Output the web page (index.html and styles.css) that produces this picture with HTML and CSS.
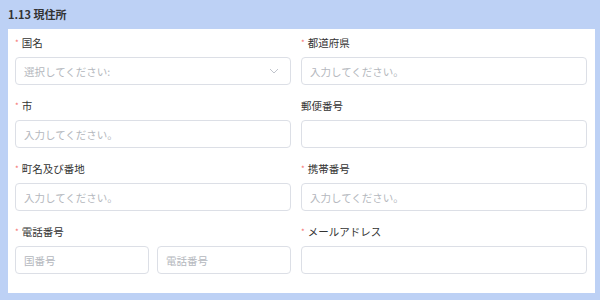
FILE: index.html
```html
<!DOCTYPE html>
<html lang="ja">
<head>
    <meta charset="UTF-8">
    <meta name="viewport" content="width=device-width, initial-scale=1.0">
    <title>現住所</title>
    <link rel="stylesheet" href="styles.css">
</head>
<body>
    <div class="section">
        <h2 class="section-title">1.13 現住所</h2>
        <div class="panel">
            <div class="form-grid">
                <div class="field">
                    <label class="label"><span class="req">*</span>国名</label>
                    <div class="select">
                        <span class="placeholder">選択してください:</span>
                        <svg class="chevron" width="10" height="6" viewBox="0 0 10 6"><path d="M1 1l4 4 4-4" fill="none" stroke="#c0c4cc" stroke-width="1"/></svg>
                    </div>
                </div>
                <div class="field">
                    <label class="label"><span class="req">*</span>都道府県</label>
                    <input class="input" placeholder="入力してください。">
                </div>
                <div class="field">
                    <label class="label"><span class="req">*</span>市</label>
                    <input class="input" placeholder="入力してください。">
                </div>
                <div class="field">
                    <label class="label">郵便番号</label>
                    <input class="input">
                </div>
                <div class="field">
                    <label class="label"><span class="req">*</span>町名及び番地</label>
                    <input class="input" placeholder="入力してください。">
                </div>
                <div class="field">
                    <label class="label"><span class="req">*</span>携帯番号</label>
                    <input class="input" placeholder="入力してください。">
                </div>
                <div class="field">
                    <label class="label"><span class="req">*</span>電話番号</label>
                    <div class="phone">
                        <input class="input" placeholder="国番号">
                        <input class="input" placeholder="電話番号">
                    </div>
                </div>
                <div class="field">
                    <label class="label"><span class="req">*</span>メールアドレス</label>
                    <input class="input">
                </div>
            </div>
        </div>
    </div>
</body>
</html>
```

FILE: styles.css
```css
body {
    margin: 0;
    background-color: #bdd1f5;
    font-family: "Noto Sans CJK JP", "Noto Sans", sans-serif;
    color: #333;
}
.section {
    height: 300px;
}
.section-title {
    margin: 0;
    height: 29px;
    line-height: 29px;
    padding-left: 8px;
    font-size: 11px;
    font-weight: bold;
    color: #333;
}
.panel {
    margin-left: 8px;
    width: 587px;
    height: 264px;
    box-sizing: border-box;
    background-color: #fff;
    padding: 6px 0 0 7px;
}
.form-grid {
    display: grid;
    grid-template-columns: 276px 286px;
    column-gap: 10px;
    row-gap: 13px;
}
.field {
    display: flex;
    flex-direction: column;
}
.label {
    font-size: 10.5px;
    line-height: 16px;
    height: 16px;
    margin-bottom: 6px;
    color: #333;
}
.req {
    color: #f56c6c;
    font-size: 8px;
    margin-right: 3px;
    vertical-align: top;
}
.input,
.select {
    height: 28px;
    box-sizing: border-box;
    border: 1px solid #dcdfe6;
    border-radius: 4px;
    padding: 0 8px;
    font-family: inherit;
    font-size: 10.5px;
    color: #333;
    background: #fff;
    outline: none;
    width: 100%;
}
.input::placeholder {
    color: #b4b7bd;
}
.select {
    display: flex;
    align-items: center;
    justify-content: space-between;
}
.placeholder {
    color: #b4b7bd;
}
.chevron {
    margin-right: 3px;
}
.phone {
    display: flex;
    gap: 8px;
}
.phone .input {
    flex: 1;
    min-width: 0;
}
```
